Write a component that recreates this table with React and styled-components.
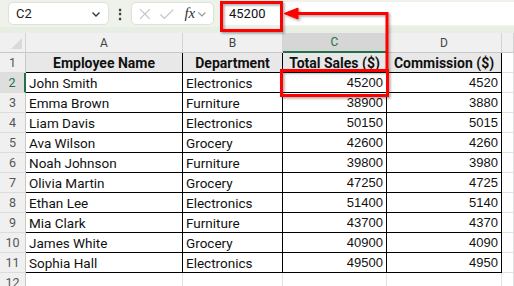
import React from 'react'
import styled, { createGlobalStyle } from 'styled-components'

const GlobalStyle = createGlobalStyle`
  body {
    margin: 0;
    background: #ffffff;
    font-family: Roboto, "Liberation Sans", sans-serif;
  }
`

const Page = styled.div`
  position: relative;
  width: 514px;
  height: 286px;
  overflow: hidden;
  background: #ffffff;
`

const TopBar = styled.div`
  height: 27px;
  display: flex;
  align-items: center;
  padding: 0 0 0 8px;
  background: #eef2eb;
  box-sizing: border-box;
`

const NameBox = styled.div`
  width: 101px;
  height: 23px;
  box-sizing: border-box;
  background: #ffffff;
  border: 1px solid #dde2da;
  border-radius: 5px;
  display: flex;
  align-items: center;
  justify-content: space-between;
  padding: 0 6px 0 7px;
  font-size: 13px;
  color: #222;
`

const Dots = styled.div`
  width: 22px;
  text-align: center;
  font-size: 14px;
  font-weight: bold;
  color: #333;
`

const FxBox = styled.div`
  width: 83px;
  height: 23px;
  box-sizing: border-box;
  background: #ffffff;
  border: 1px solid #dde2da;
  border-radius: 5px;
  display: flex;
  align-items: center;
  gap: 7px;
  padding: 0 6px 0 6px;
`

const FxText = styled.span`
  font-family: "Liberation Serif", serif;
  font-style: italic;
  font-size: 15px;
  color: #333;
  margin-left: 3px;
`

const Formula = styled.div`
  flex: 1;
  height: 23px;
  margin-left: 8px;
  background: #ffffff;
  display: flex;
  align-items: center;
  padding-left: 7px;
  font-size: 13px;
  color: #111;
`

const Band = styled.div`
  height: 6px;
  background: #e7eee3;
`

const Sheet = styled.div`
  display: grid;
  grid-template-columns: 26px 157px 100px 104px 115px 1fr;
  grid-auto-rows: 20px;
`

const Corner = styled.div`
  position: relative;
  background: #f0f0f0;
  border-right: 1px solid #d4d4d4;
  border-bottom: 1px solid #c8c8c8;
  box-sizing: border-box;
  &::after {
    content: '';
    position: absolute;
    right: 3px;
    bottom: 3px;
    border-left: 11px solid transparent;
    border-bottom: 11px solid #d9d9d9;
  }
`

const ColHead = styled.div`
  background: ${p => (p.$active ? '#d6d6d6' : '#f0f0f0')};
  color: ${p => (p.$active ? '#217346' : '#444')};
  border-right: 1px solid #d4d4d4;
  border-bottom: ${p => (p.$active ? '2px solid #217346' : '1px solid #c8c8c8')};
  box-sizing: border-box;
  display: flex;
  align-items: center;
  justify-content: center;
  font-size: 12px;
`

const RowHead = styled.div`
  background: ${p => (p.$active ? '#dedede' : '#f0f0f0')};
  color: ${p => (p.$active ? '#217346' : '#555')};
  border-right: ${p => (p.$active ? '2px solid #217346' : '1px solid #c8c8c8')};
  border-bottom: 1px solid #dcdcdc;
  box-sizing: border-box;
  display: flex;
  align-items: center;
  justify-content: center;
  font-size: 12.5px;
`

const Cell = styled.div`
  box-sizing: border-box;
  border-right: 1px solid ${p => (p.$table ? '#000' : '#e1e1e1')};
  border-bottom: 1px solid ${p => (p.$table ? '#000' : '#e1e1e1')};
  background: ${p => (p.$head ? '#e8e8e8' : '#ffffff')};
  display: flex;
  align-items: center;
  justify-content: ${p => (p.$num ? 'flex-end' : p.$head ? 'center' : 'flex-start')};
  padding: 0 3px 0 3px;
  font-size: ${p => (p.$head ? '14px' : p.$num ? '13px' : '13.5px')};
  font-weight: ${p => (p.$head ? 700 : 400)};
  font-family: ${p => (p.$num ? '"Liberation Sans", Arial, sans-serif' : 'Roboto, "Liberation Sans", sans-serif')};
  color: #111;
  white-space: nowrap;
  overflow: hidden;
`

const Overlay = styled.svg`
  position: absolute;
  left: 0;
  top: 0;
  pointer-events: none;
`

const Chevron = () => (
  <svg width="12" height="12" viewBox="0 0 12 12">
    <path d="M2.5 4.5 L6 8 L9.5 4.5" fill="none" stroke="#333" strokeWidth="1.3" />
  </svg>
)

const data = [
  ['John Smith', 'Electronics', 45200, 4520],
  ['Emma Brown', 'Furniture', 38900, 3880],
  ['Liam Davis', 'Electronics', 50150, 5015],
  ['Ava Wilson', 'Grocery', 42600, 4260],
  ['Noah Johnson', 'Furniture', 39800, 3980],
  ['Olivia Martin', 'Grocery', 47250, 4725],
  ['Ethan Lee', 'Electronics', 51400, 5140],
  ['Mia Clark', 'Furniture', 43700, 4370],
  ['James White', 'Grocery', 40900, 4090],
  ['Sophia Hall', 'Electronics', 49500, 4950],
]

const App = () => {
  return (
    <Page>
      <GlobalStyle />
      <TopBar>
        <NameBox>
          C2
          <Chevron />
        </NameBox>
        <Dots>⋮</Dots>
        <FxBox>
          <svg width="14" height="14" viewBox="0 0 14 14">
            <path d="M2 2 L12 12 M12 2 L2 12" stroke="#c4c4c4" strokeWidth="1.3" />
          </svg>
          <svg width="16" height="14" viewBox="0 0 16 14">
            <path d="M1.5 7.5 L5.5 11.5 L14.5 2.5" fill="none" stroke="#c4c4c4" strokeWidth="1.3" />
          </svg>
          <FxText>fx</FxText>
          <svg width="10" height="12" viewBox="0 0 10 12" style={{ marginLeft: -5 }}>
            <path d="M1.5 4.5 L5 8 L8.5 4.5" fill="none" stroke="#999" strokeWidth="1.2" />
          </svg>
        </FxBox>
        <Formula>45200</Formula>
      </TopBar>
      <Band />
      <Sheet>
        <Corner />
        <ColHead>A</ColHead>
        <ColHead>B</ColHead>
        <ColHead $active>C</ColHead>
        <ColHead>D</ColHead>
        <ColHead />

        <RowHead>1</RowHead>
        <Cell $table $head>Employee Name</Cell>
        <Cell $table $head>Department</Cell>
        <Cell $table $head>Total Sales ($)</Cell>
        <Cell $table $head>Commission ($)</Cell>
        <Cell />

        {data.map((r, i) => (
          <React.Fragment key={r[0]}>
            <RowHead $active={i === 0}>{i + 2}</RowHead>
            <Cell $table>{r[0]}</Cell>
            <Cell $table>{r[1]}</Cell>
            <Cell $table $num>{r[2]}</Cell>
            <Cell $table $num>{r[3]}</Cell>
            <Cell />
          </React.Fragment>
        ))}

        <RowHead>12</RowHead>
        <Cell />
        <Cell />
        <Cell />
        <Cell />
        <Cell />
      </Sheet>

      <Overlay width="514" height="286" viewBox="0 0 514 286">
        <defs>
          <filter id="sh" x="-10%" y="-10%" width="130%" height="130%">
            <feDropShadow dx="1.5" dy="1.5" stdDeviation="1" floodColor="#000" floodOpacity="0.35" />
          </filter>
        </defs>
        <g filter="url(#sh)" stroke="#ff0000" fill="none" strokeWidth="3">
          <rect x="221.5" y="2.5" width="60" height="28" />
          <rect x="281.5" y="70.5" width="106" height="25" />
          <path d="M387 70 L387 13.5 L296 13.5" />
          <path d="M284 13.5 L298 8 L298 19 Z" fill="#ff0000" strokeWidth="1" />
        </g>
      </Overlay>
    </Page>
  )
}

export default App
